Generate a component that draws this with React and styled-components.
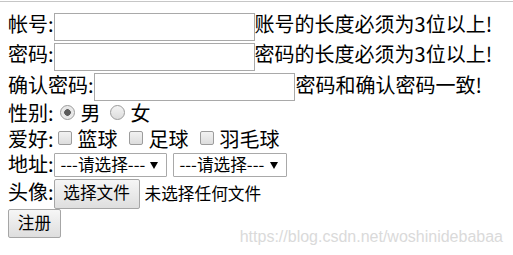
import React from "react";
import styled, { createGlobalStyle } from "styled-components";

const Global = createGlobalStyle`
  html, body { margin: 0; padding: 0; background: #fff; }
  body {
    font-family: "Noto Sans CJK SC", "Noto Sans", sans-serif;
    color: #000;
  }
`;

const Page = styled.div`
  position: relative;
  width: 513px;
  height: 255px;
  overflow: hidden;
  box-sizing: border-box;
`;

const TopRule = styled.div`
  height: 1px;
  margin-top: 1px;
  background: #c6c6c6;
`;

const Form = styled.form`
  display: flex;
  flex-direction: column;
  padding: 10px 8px 0 8px;
`;

const Row = styled.div`
  display: flex;
  align-items: center;
  height: ${(p) => p.$h}px;
`;

const Text = styled.span`
  font-size: ${(p) => p.$size || 20}px;
  line-height: 1;
  white-space: nowrap;
  padding-bottom: ${(p) => p.$lift || 0}px;
  margin-left: ${(p) => p.$ml || 0}px;
`;

const TextInput = styled.input`
  box-sizing: border-box;
  width: ${(p) => p.$w || 201}px;
  height: 28px;
  margin: 0;
  padding: 0 3px;
  border: 1px solid #a9a9a9;
  border-radius: 0;
  background: #fff;
  font: inherit;
  font-size: 16px;
  outline: none;
`;

const Radio = styled.input.attrs({ type: "radio" })`
  appearance: none;
  box-sizing: border-box;
  width: 15px;
  height: 15px;
  margin: 0 ${(p) => p.$mr}px ${4}px ${(p) => p.$ml}px;
  border: 1px solid #9a9a9a;
  border-radius: 50%;
  background: ${(p) =>
    p.defaultChecked
      ? "radial-gradient(circle, #5a5a5a 0 3px, #e4e4e4 3.6px, #f2f2f2 100%)"
      : "linear-gradient(#f4f4f4, #dcdcdc)"};
`;

const Check = styled.input.attrs({ type: "checkbox" })`
  appearance: none;
  box-sizing: border-box;
  width: 14px;
  height: 14px;
  margin: 0 ${(p) => p.$mr}px 3px ${(p) => p.$ml}px;
  border: 1px solid #9c9c9c;
  border-radius: 2px;
  background: linear-gradient(#f2f2f2, #dddddd);
`;

const SelectBox = styled.div`
  box-sizing: border-box;
  display: flex;
  align-items: center;
  justify-content: space-between;
  width: ${(p) => p.$w}px;
  height: 24px;
  margin-left: ${(p) => p.$ml || 0}px;
  padding: 0 8px 0 6px;
  border: 1px solid #a9a9a9;
  border-radius: 1px;
  background: #fff;
  font-size: 16.67px;
  line-height: 1;
  white-space: nowrap;
`;

const SelectText = styled.span`
  padding-bottom: 2px;
`;

const Arrow = styled.svg`
  width: 8px;
  height: 7px;
  flex: none;
`;

const Button = styled.button`
  box-sizing: border-box;
  width: ${(p) => p.$w}px;
  height: ${(p) => p.$h}px;
  margin: 0;
  padding: 0;
  border: 1px solid #a6a6a6;
  border-radius: 2px;
  background: linear-gradient(#f6f6f6, #dedede);
  font-family: inherit;
  font-size: 16.67px;
  line-height: 1;
  color: #000;
  display: flex;
  align-items: center;
  justify-content: center;
`;

const ButtonLabel = styled.span`
  padding-bottom: 2px;
`;

const Watermark = styled.div`
  position: absolute;
  right: 10px;
  bottom: 10px;
  font-family: "Liberation Sans", Arial, sans-serif;
  font-size: 16px;
  line-height: 16px;
  color: #dadada;
  white-space: nowrap;
`;

function Select({ w, ml }) {
  return (
    <SelectBox $w={w} $ml={ml}>
      <SelectText>---请选择---</SelectText>
      <Arrow viewBox="0 0 8 7">
        <path d="M0 0 H8 L4 7 Z" fill="#000" />
      </Arrow>
    </SelectBox>
  );
}

export default function App() {
  return (
    <Page>
      <Global />
      <TopRule />
      <Form onSubmit={(e) => e.preventDefault()}>
        <Row $h={30}>
          <Text $lift={6}>帐号:</Text>
          <TextInput />
          <Text $lift={6}>账号的长度必须为3位以上!</Text>
        </Row>
        <Row $h={30}>
          <Text $lift={7}>密码:</Text>
          <TextInput type="password" />
          <Text $lift={7}>密码的长度必须为3位以上!</Text>
        </Row>
        <Row $h={30}>
          <Text $lift={4}>确认密码:</Text>
          <TextInput type="password" />
          <Text $lift={4} $ml={1}>密码和确认密码一致!</Text>
        </Row>
        <Row $h={25}>
          <Text $lift={3}>性别:</Text>
          <Radio name="sex" defaultChecked $ml={6} $mr={6} />
          <Text $lift={3}>男</Text>
          <Radio name="sex" $ml={9} $mr={6} />
          <Text $lift={3}>女</Text>
        </Row>
        <Row $h={25}>
          <Text $lift={1}>爱好:</Text>
          <Check $ml={4} $mr={6} />
          <Text $lift={1}>篮球</Text>
          <Check $ml={11} $mr={6} />
          <Text $lift={1}>足球</Text>
          <Check $ml={11} $mr={6} />
          <Text $lift={1}>羽毛球</Text>
        </Row>
        <Row $h={26}>
          <Text $lift={3}>地址:</Text>
          <Select w={113} />
          <Select w={114} ml={6} />
        </Row>
        <Row $h={31}>
          <Text $lift={3}>头像:</Text>
          <Button type="button" $w={86} $h={30}>
            <ButtonLabel>选择文件</ButtonLabel>
          </Button>
          <Text $size={16.67} $lift={1} $ml={5}>未选择任何文件</Text>
        </Row>
        <Row $h={29}>
          <Button type="submit" $w={53} $h={29}>
            <ButtonLabel>注册</ButtonLabel>
          </Button>
        </Row>
      </Form>
      <Watermark>https://blog.csdn.net/woshinidebabaa</Watermark>
    </Page>
  );
}
